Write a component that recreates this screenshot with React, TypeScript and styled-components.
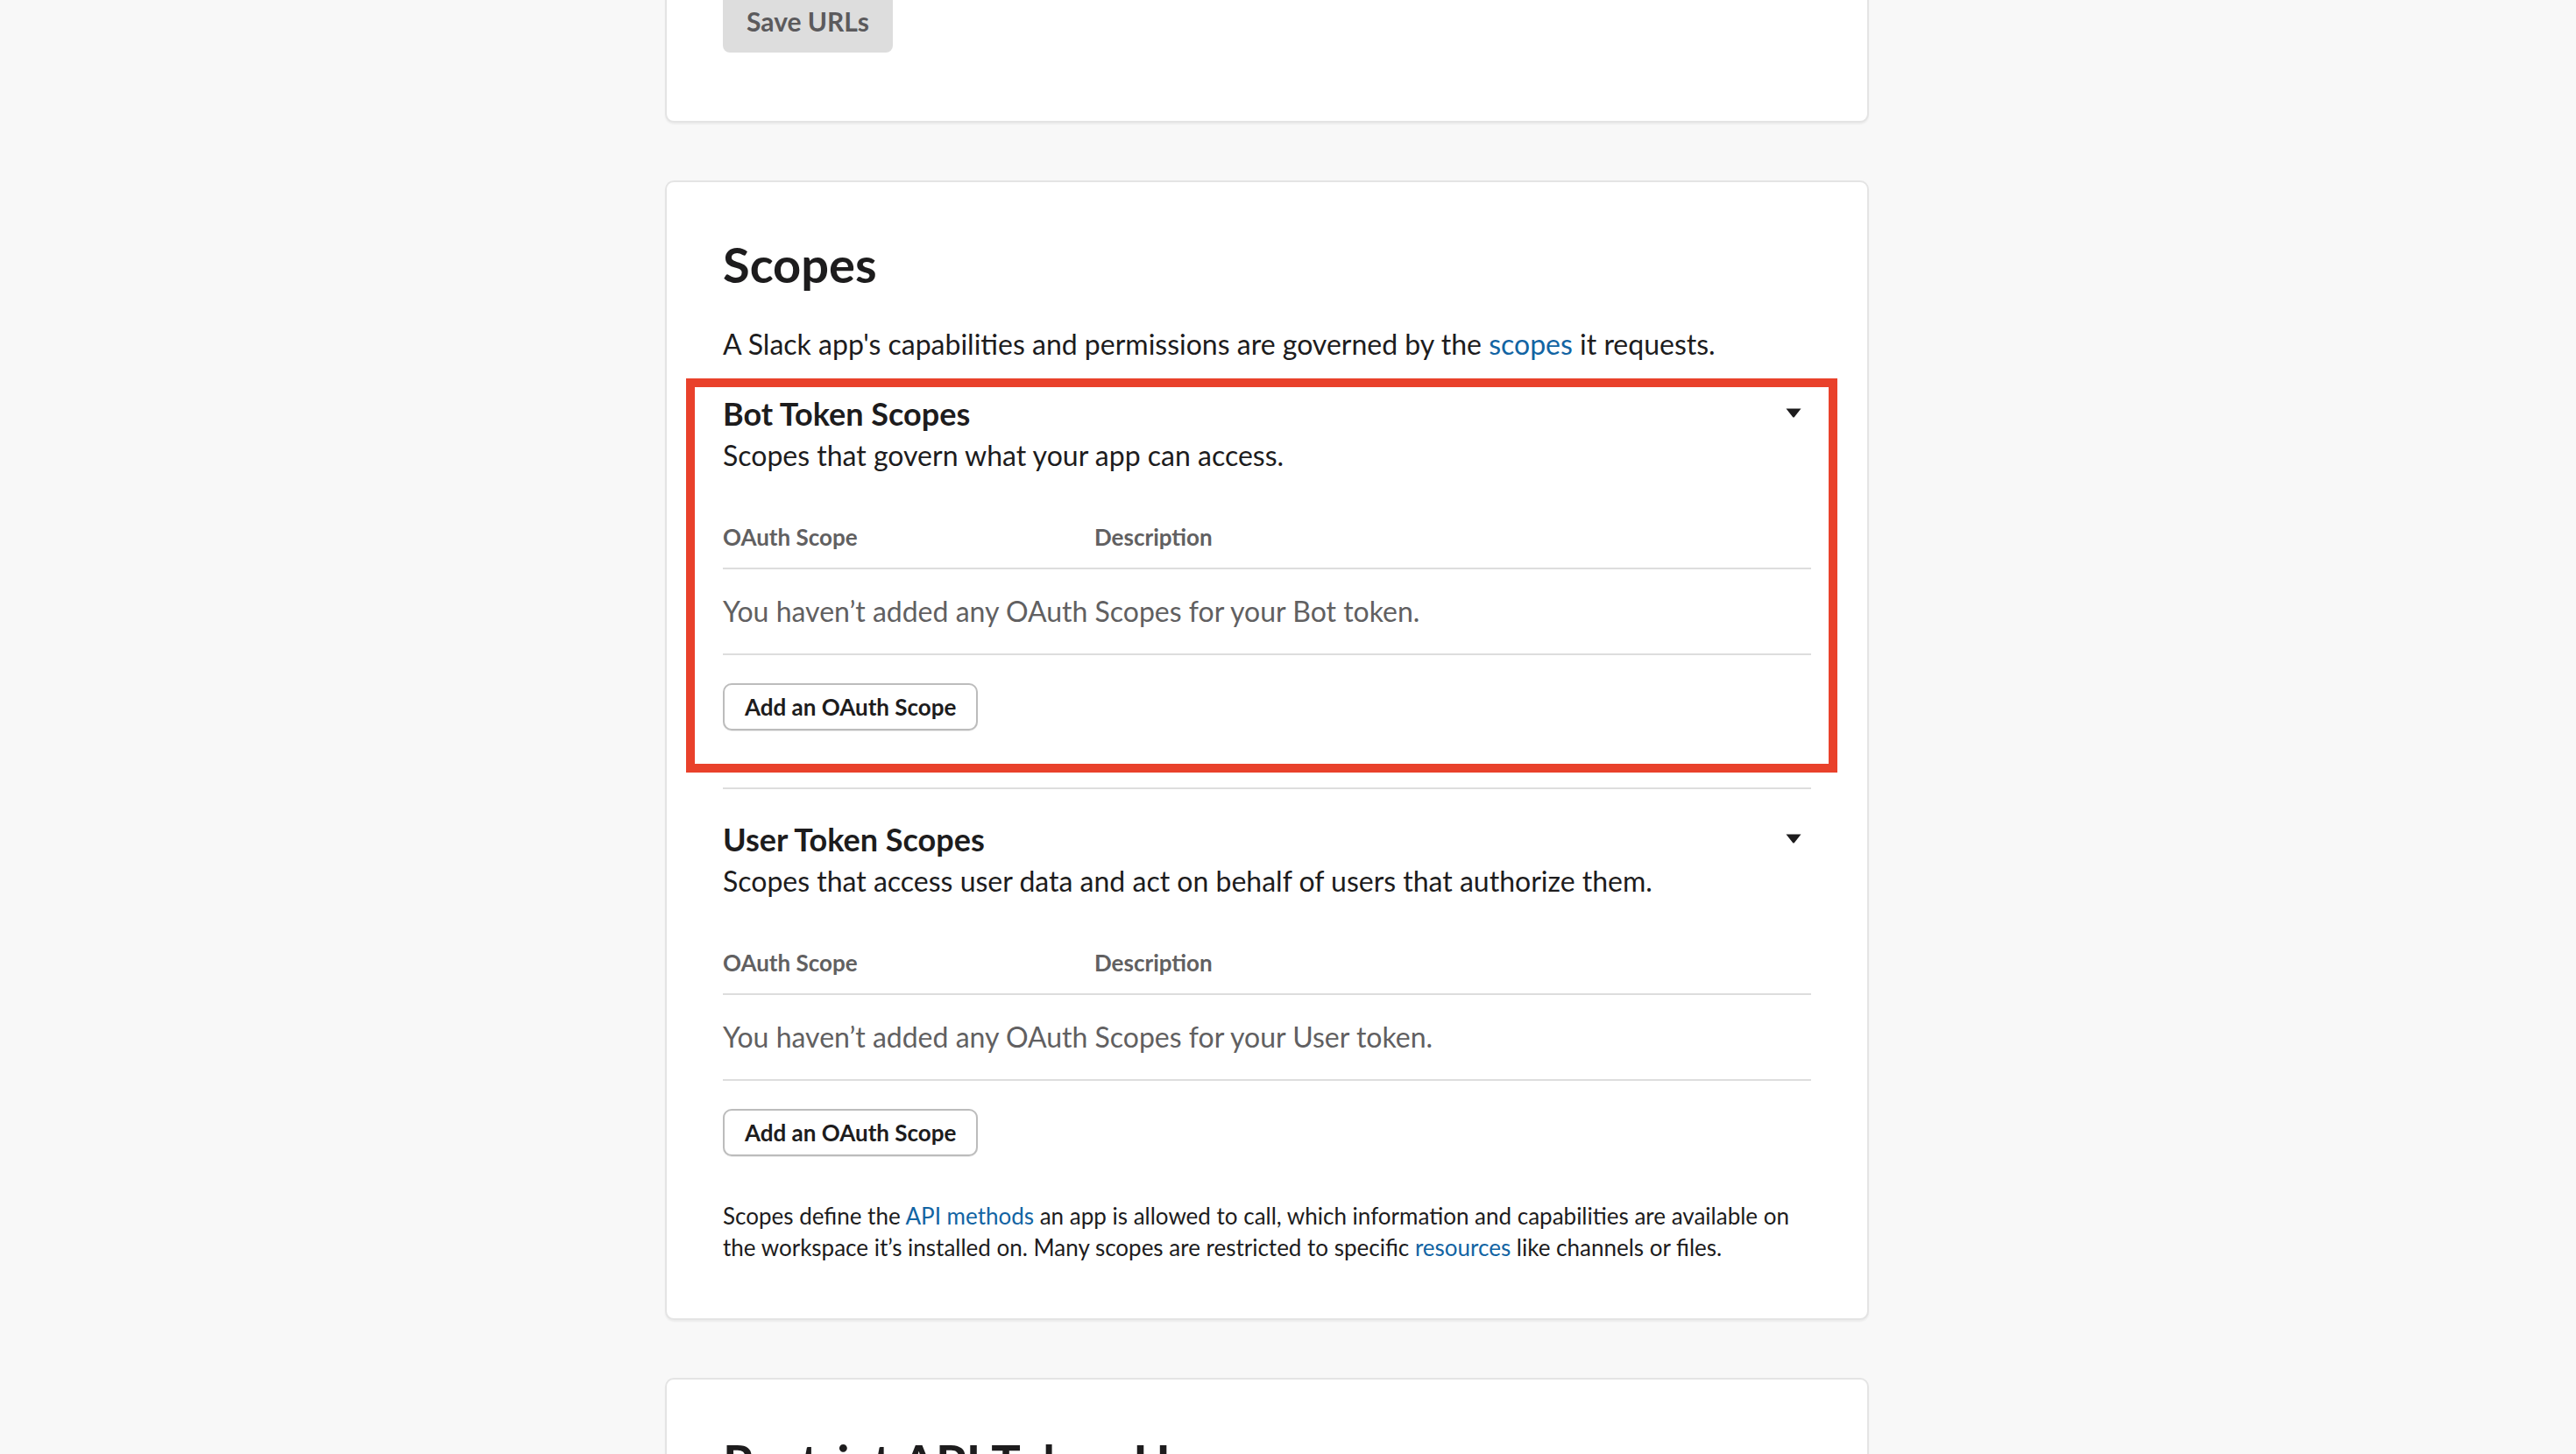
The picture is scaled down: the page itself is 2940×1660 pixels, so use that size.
import React from "react";
import styled, { createGlobalStyle } from "styled-components";

const GlobalStyle = createGlobalStyle`
  html, body {
    margin: 0;
    padding: 0;
    background: #f8f8f8;
    font-family: Lato, "Noto Sans", sans-serif;
    color: #1d1c1d;
    overflow: hidden;
  }
`;

// Layout
const Page = styled.main`
  display: flex;
  flex-direction: column;
  gap: 66px;
  width: 1374px;
  margin: -74px 0 0 759px;
`;
const Card = styled.section<{ $bottom?: number }>`
  background: #fff;
  border: 2px solid #e4e4e4;
  border-radius: 10px;
  box-shadow: 0 2px 2px rgba(0, 0, 0, 0.05);
  padding: 60px 64px ${(p) => p.$bottom ?? 63}px;
`;
const Title = styled.h2`
  margin: 0;
  font-size: 56px;
  line-height: 68px;
  font-weight: 700;
`;
const Intro = styled.p`
  margin: 35px 0 0;
  font-size: 32px;
  line-height: 44px;
`;
const Link = styled.a`
  color: #1264a3;
  text-decoration: none;
`;

// Scope sections
const ScopeSection = styled.div`
  position: relative;
  padding-top: 35px;
  & + & {
    margin-top: 65px;
    border-top: 2px solid #dddddd;
  }
`;
const Highlight = styled.div`
  position: absolute;
  top: 17px;
  bottom: -48px;
  left: -42px;
  right: -30px;
  border: 10px solid #e9412b;
  pointer-events: none;
`;
const SectionHead = styled.div`
  display: flex;
  justify-content: space-between;
  align-items: flex-start;
`;
const SectionTitle = styled.h3`
  margin: 0;
  font-size: 36px;
  line-height: 44px;
  font-weight: 700;
`;
const SectionSub = styled.p`
  margin: 5px 0 0;
  font-size: 32px;
  line-height: 42px;
`;
const Caret = styled.svg`
  width: 18px;
  height: 11px;
  margin: 16px 11px 0 0;
  flex: none;
`;
const TableHead = styled.div`
  display: grid;
  grid-template-columns: 424px 1fr;
  margin-top: 57px;
  padding-bottom: 20px;
  border-bottom: 2px solid #dddddd;
  font-size: 26px;
  line-height: 30px;
  font-weight: 700;
  color: #616061;
`;
const EmptyRow = styled.div`
  padding: 28px 0 28px;
  border-bottom: 2px solid #dddddd;
  font-size: 32px;
  line-height: 40px;
  color: #616061;
`;
const Button = styled.button<{ $disabled?: boolean }>`
  display: inline-flex;
  align-items: center;
  box-sizing: border-box;
  font-family: inherit;
  font-weight: 700;
  cursor: pointer;
  ${(p) =>
    p.$disabled
      ? `
    height: 72px;
    padding: 0 27px;
    font-size: 30px;
    border: none;
    border-radius: 8px;
    background: #dddddd;
    color: #5b5a5c;
  `
      : `
    height: 54px;
    padding: 0 23px;
    font-size: 26px;
    border: 2px solid #bcbcbc;
    border-radius: 10px;
    background: #fff;
    color: #1d1c1d;
    box-shadow: 0 1px 0 rgba(0, 0, 0, 0.08);
  `}
`;
const ButtonRow = styled.div`
  margin-top: 32px;
  display: flex;
`;
const Footnote = styled.p`
  margin: 50px 0 0;
  font-size: 26px;
  line-height: 36px;
`;

type Scope = { title: string; sub: string; token: string; marked?: boolean };

const scopes: Scope[] = [
  {
    title: "Bot Token Scopes",
    sub: "Scopes that govern what your app can access.",
    token: "Bot",
    marked: true,
  },
  {
    title: "User Token Scopes",
    sub: "Scopes that access user data and act on behalf of users that authorize them.",
    token: "User",
  },
];

const ScopeBlock = ({ scope }: { scope: Scope }) => (
  <ScopeSection>
    <SectionHead>
      <div>
        <SectionTitle>{scope.title}</SectionTitle>
        <SectionSub>{scope.sub}</SectionSub>
      </div>
      <Caret viewBox="0 0 18 11">
        <path d="M0.5 0.5 H17.5 L9.8 10.2 Q9 11 8.2 10.2 Z" fill="#1d1c1d" />
      </Caret>
    </SectionHead>
    <TableHead>
      <span>OAuth Scope</span>
      <span>Description</span>
    </TableHead>
    <EmptyRow>
      You haven’t added any OAuth Scopes for your {scope.token} token.
    </EmptyRow>
    <ButtonRow>
      <Button>Add an OAuth Scope</Button>
    </ButtonRow>
    {scope.marked && <Highlight />}
  </ScopeSection>
);

const App = (): JSX.Element => {
  return (
    <>
      <GlobalStyle />
      <Page>
        <Card $bottom={78}>
          <Button $disabled>Save URLs</Button>
        </Card>

        <Card>
          <Title>Scopes</Title>
          <Intro>
            A Slack app's capabilities and permissions are governed by the{" "}
            <Link href="#">scopes</Link> it requests.
          </Intro>
          {scopes.map((s) => (
            <ScopeBlock key={s.title} scope={s} />
          ))}
          <Footnote>
            Scopes define the <Link href="#">API methods</Link> an app is
            allowed to call, which information and capabilities are available
            on the workspace it’s installed on. Many scopes are restricted to
            specific <Link href="#">resources</Link> like channels or files.
          </Footnote>
        </Card>

        <Card>
          <Title>Restrict API Token Usage</Title>
        </Card>
      </Page>
    </>
  );
};

export default App;
